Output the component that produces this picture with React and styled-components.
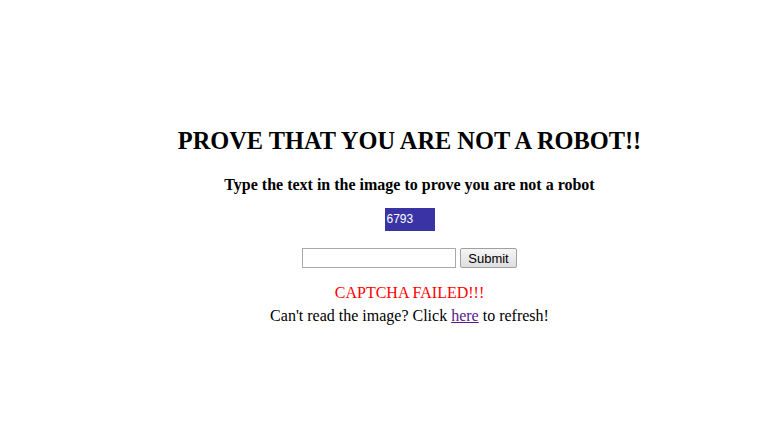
import React from "react";
import styled, { createGlobalStyle } from "styled-components";

const Global = createGlobalStyle`
  body {
    margin: 0;
    background: #ffffff;
    font-family: "Liberation Serif", "Times New Roman", serif;
  }
`;

const Page = styled.div`
  display: flex;
  flex-direction: column;
  align-items: center;
  padding: 127px 0 0 43px;
  color: #000;
`;

const Title = styled.h2`
  margin: 0;
  font-size: 24.4px;
  line-height: 28px;
  font-weight: bold;
`;

const Subtitle = styled.h3`
  margin: 20px 0 0;
  font-size: 16px;
  line-height: 19px;
  font-weight: bold;
`;

const Captcha = styled.div`
  margin-top: 14px;
  width: 50px;
  height: 23px;
  box-sizing: border-box;
  padding: 0 2px;
  background: #3a33a6;
  color: #ffffff;
  font-family: "Liberation Sans", Arial, sans-serif;
  font-size: 12px;
  line-height: 23px;
`;

const Form = styled.form`
  display: flex;
  gap: 4px;
  margin-top: 17px;
`;

const Field = styled.input`
  width: 154px;
  height: 20px;
  box-sizing: border-box;
  border: 1px solid #a9a9a9;
  padding: 1px 2px;
  font-family: "Liberation Sans", Arial, sans-serif;
  font-size: 13px;
`;

const Button = styled.button`
  width: 57px;
  height: 20px;
  box-sizing: border-box;
  padding: 0;
  border: 1px solid #a0a0a0;
  border-radius: 2px;
  background: linear-gradient(#f6f6f6, #dedede);
  color: #000;
  font-family: "Liberation Sans", Arial, sans-serif;
  font-size: 13px;
`;

const Error = styled.div`
  margin-top: 15px;
  color: #ff0000;
  font-size: 16px;
  line-height: 20px;
`;

const Hint = styled.div`
  margin-top: 3px;
  font-size: 16px;
  line-height: 20px;

  a {
    color: #551a8b;
  }
`;

export default function App() {
  return (
    <>
      <Global />
      <Page>
        <Title>PROVE THAT YOU ARE NOT A ROBOT!!</Title>
        <Subtitle>Type the text in the image to prove you are not a robot</Subtitle>
        <Captcha>6793</Captcha>
        <Form onSubmit={e => e.preventDefault()}>
          <Field type="text" />
          <Button type="submit">Submit</Button>
        </Form>
        <Error>CAPTCHA FAILED!!!</Error>
        <Hint>
          Can't read the image? Click <a href="#">here</a> to refresh!
        </Hint>
      </Page>
    </>
  );
}
